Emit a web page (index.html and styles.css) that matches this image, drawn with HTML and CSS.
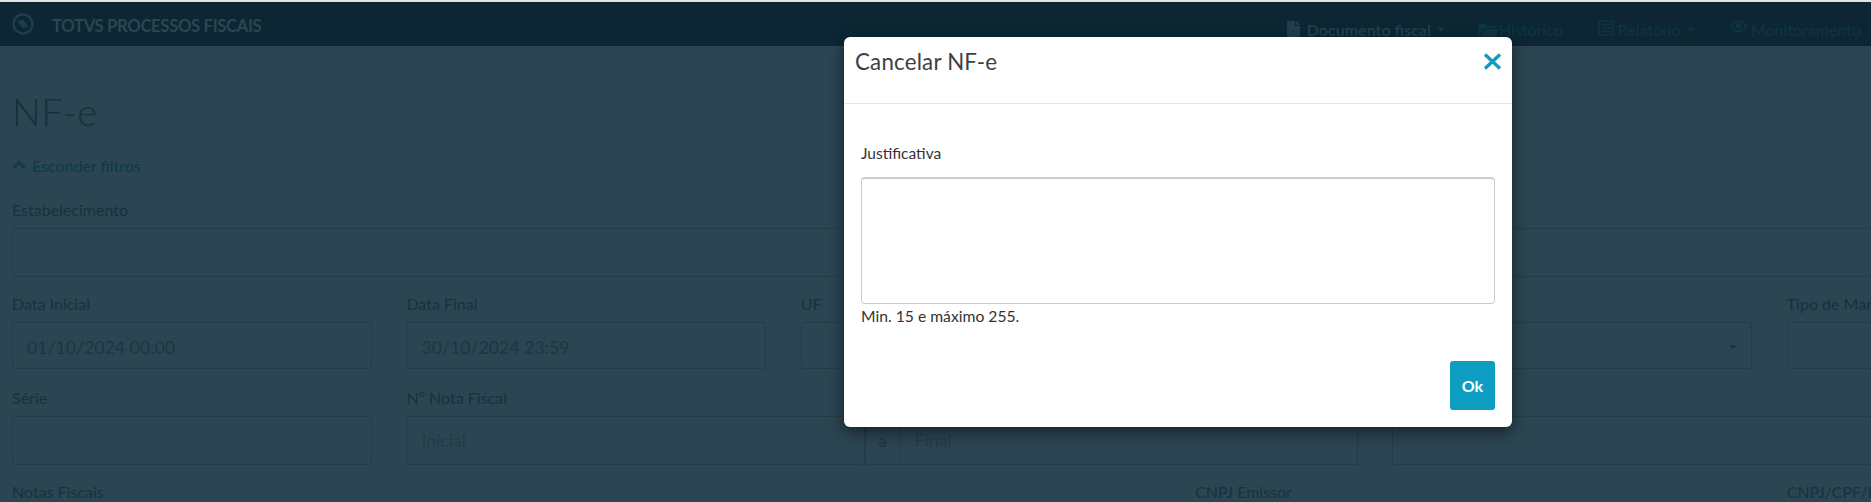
FILE: index.html
```html
<!DOCTYPE html>
<html lang="pt-BR">
<head>
<meta charset="utf-8">
<title>NF-e</title>
<link rel="stylesheet" href="styles.css">
</head>
<body>
<header class="navbar">
  <div class="brand">
    <svg class="brand-logo" viewBox="0 0 22 22" aria-hidden="true"><circle cx="11" cy="11" r="9.5" fill="none" stroke="#1f3e4d" stroke-width="2.4"/><path d="M5.5 8.5 L11 6.5 C13 9 13.5 10.5 16.5 13.5 L11 15.5 C9 13 8.5 11.5 5.5 8.5Z" fill="#1f3e4d"/></svg>
    <span class="brand-name">TOTVS PROCESSOS FISCAIS</span>
  </div>
  <nav class="nav">
    <a class="nav-item nav-item--active">
      <svg class="nav-icon nav-icon--doc" viewBox="0 0 13 16" aria-hidden="true"><path d="M0 0h8v5h5v11H0zM9 0l4 4H9z" fill="#233f4d"/></svg>
      <span>Documento fiscal</span><i class="caret"></i>
    </a>
    <a class="nav-item nav-item--folder">
      <svg class="nav-icon nav-icon--folder" viewBox="0 0 20 15" aria-hidden="true"><path d="M0 2h7l2 2h7v2H5L1 13H0zM5.500 7H20l-4 8H1.500z" fill="#0e3546"/></svg>
      <span>Histórico</span>
    </a>
    <a class="nav-item nav-item--report">
      <svg class="nav-icon nav-icon--list" viewBox="0 0 16 16" aria-hidden="true"><path d="M1 1h14v14H1z" fill="none" stroke="#0e3546" stroke-width="1.600"/><path d="M3.500 4.500h9M3.500 8h9M3.500 11.500h9" stroke="#0e3546" stroke-width="1.600"/></svg>
      <span>Relatório</span><i class="caret caret--dim"></i>
    </a>
    <a class="nav-item nav-item--monitor">
      <svg class="nav-icon nav-icon--eye" viewBox="0 0 18 14" aria-hidden="true"><path d="M1 7c2-3.800 5-5.500 8-5.500S15 3.200 17 7c-2 3.800-5 5.500-8 5.500S3 10.800 1 7z" fill="none" stroke="#0e3546" stroke-width="1.800"/><circle cx="9" cy="6.500" r="3" fill="#0e3546"/></svg>
      <span>Monitoramento</span><i class="caret caret--dim"></i>
    </a>
  </nav>
</header>

<main class="page">
  <h1 class="page-title">NF-e</h1>
  <a class="toggle">
    <svg class="toggle-icon" viewBox="0 0 14 10" aria-hidden="true"><path d="M1.500 8 L7 2.500 L12.500 8" fill="none" stroke="#10394b" stroke-width="3"/></svg>
    <span>Esconder filtros</span>
  </a>
  <form class="filters">
    <div class="field span-12"><label class="label">Estabelecimento</label><div class="input"></div></div>

    <div class="field span-2"><label class="label">Data Inicial</label><div class="input input--short">01/10/2024 00:00</div></div>
    <div class="field span-2"><label class="label">Data Final</label><div class="input input--short">30/10/2024 23:59</div></div>
    <div class="field span-2"><label class="label">UF</label><div class="input input--short"></div></div>
    <div class="field span-1"></div>
    <div class="field span-2"><label class="label">Situação</label><div class="input input--short input--select"><i class="caret caret--select"></i></div></div>
    <div class="field span-3"><label class="label">Tipo de Manifestação</label><div class="input input--short"></div></div>

    <div class="field span-2"><label class="label">Série</label><div class="input"></div></div>
    <div class="field span-5">
      <label class="label">Nº Nota Fiscal</label>
      <div class="group">
        <div class="input input--placeholder input--grow">Inicial</div>
        <span class="addon">a</span>
        <div class="input input--placeholder input--grow input--joined">Final</div>
      </div>
    </div>
    <div class="field span-5"><label class="label">Chave</label><div class="input"></div></div>

    <div class="field span-6"><label class="label">Notas Fiscais</label></div>
    <div class="field span-3"><label class="label">CNPJ Emissor</label></div>
    <div class="field span-3"><label class="label">CNPJ/CPF/ID Destinatário</label></div>
  </form>
</main>

<section class="modal" role="dialog" aria-label="Cancelar NF-e">
  <header class="modal-header">
    <h2 class="modal-title">Cancelar NF-e</h2>
    <svg class="modal-close" viewBox="0 0 19 17" aria-hidden="true"><path d="M2 1.500 L17 15.500 M17 1.500 L2 15.500" stroke="#0e9dc2" stroke-width="3.400" fill="none"/></svg>
  </header>
  <div class="modal-body">
    <label class="modal-label">Justificativa</label>
    <textarea class="modal-textarea"></textarea>
    <p class="modal-hint">Min. 15 e máximo 255.</p>
  </div>
  <footer class="modal-footer">
    <button class="btn" type="button">Ok</button>
  </footer>
</section>
</body>
</html>
```
FILE: styles.css
```css
* { box-sizing: border-box; }
html, body { margin: 0; height: 502px; overflow: hidden; }
body {
  background: #2b4552;
  border-top: 2px solid #dfe4e6;
  font-family: Lato, "Liberation Sans", sans-serif;
  color: #1b3442;
  font-size: 16px;
  position: relative;
}

.navbar {
  height: 44px;
  background: #0c2733;
  display: flex;
  align-items: center;
  justify-content: space-between;
  padding-left: 12px;
}
.brand { display: flex; align-items: center; gap: 18px; padding-top: 1px; }
.brand-logo { width: 22px; height: 22px; margin-top: -2px; }
.brand-name { color: #2b4552; font-weight: 700; font-size: 16.700px; letter-spacing: -0.350px; padding-top: 2px; }

.nav { display: flex; align-items: center; padding-top: 10px; margin-right: -3px; }
.nav-item { display: flex; align-items: center; color: #0e3546; font-size: 16px; }
.nav-item--active { color: #233f4d; font-weight: 700; }
.nav-item--folder { margin-left: 35px; }
.nav-item--report { margin-left: 35px; }
.nav-item--monitor { margin-left: 36px; }
.nav-icon { display: block; margin-right: 4px; }
.nav-icon--doc { width: 13px; height: 16px; margin-right: 7px; }
.nav-icon--folder { width: 20px; height: 15px; margin-right: 0; }
.nav-icon--list { width: 16px; height: 16px; margin-top: -3px; }
.nav-icon--eye { width: 17px; height: 14px; margin-top: -6px; }
.caret {
  display: block;
  width: 0;
  height: 0;
  margin-left: 7px;
  border-top: 3px solid #233f4d;
  border-left: 3px solid transparent;
  border-right: 3px solid transparent;
}
.caret--dim { border-top-color: #0e3546; }

.page { padding: 0 12px; }
.page-title {
  margin: 42px 0 0;
  font-size: 38px;
  line-height: 46px;
  font-weight: 300;
  letter-spacing: .500px;
  color: #16303d;
}
.toggle {
  display: flex;
  align-items: center;
  gap: 6px;
  margin-top: 21px;
  height: 20px;
  color: #0e394b;
  font-weight: 400;
}
.toggle-icon { width: 14px; height: 10px; }

.filters {
  display: grid;
  grid-template-columns: repeat(12, 162.600px);
  column-gap: 34.600px;
  row-gap: 17px;
  margin-top: 25px;
}
.field { height: 77px; min-width: 0; }
.span-1 { grid-column: span 1; }
.span-2 { grid-column: span 2; }
.span-3 { grid-column: span 3; }
.span-5 { grid-column: span 5; }
.span-6 { grid-column: span 6; }
.span-12 { grid-column: span 12; }

.label { display: block; height: 20px; line-height: 20px; margin-bottom: 8px; white-space: nowrap; font-weight: 400; color: #18313e; }
.input {
  height: 49px;
  border: 1px solid #243c49;
  border-radius: 3px;
  padding: 0 14px;
  display: flex;
  align-items: center;
  font-size: 17.700px;
  font-weight: 400;
  color: #1d3644;
  position: relative;
}
.input--short { height: 47px; padding-top: 3px; }
.input--placeholder { color: #233b48; }
.input--select { justify-content: flex-end; }
.caret--select { border-top-color: #1b3442; border-top-width: 4px; border-left-width: 4px; border-right-width: 4px; }
.group { display: flex; }
.input--grow { flex: 1; min-width: 0; }
.input--joined { border-left: 0; border-radius: 0 3px 3px 0; }
.addon {
  width: 36px;
  height: 49px;
  display: flex;
  align-items: center;
  justify-content: center;
  border: 1px solid #243c49;
  color: #1d3644;
  font-size: 17.700px;
}

.modal {
  position: absolute;
  left: 844px;
  top: 35px;
  width: 668px;
  height: 390px;
  background: #fff;
  border-radius: 6px;
  box-shadow: 0 5px 15px rgba(0, 0, 0, .5);
  display: flex;
  flex-direction: column;
  color: #333;
}
.modal-header {
  height: 67px;
  flex: none;
  border-bottom: 1px solid #e5e5e5;
  padding: 0 10px 17px 11px;
  display: flex;
  align-items: center;
  justify-content: space-between;
}
.modal-title { margin: 0; font-size: 22.300px; font-weight: 400; color: #3f3f3f; letter-spacing: .200px; }
.modal-close { width: 19px; height: 17px; }
.modal-body { padding: 39px 17px 0; flex: 1; }
.modal-label { display: block; height: 20px; line-height: 20px; font-size: 15.500px; font-weight: 400; color: #333; }
.modal-textarea {
  display: block;
  width: 100%;
  height: 127px;
  margin: 14px 0 0;
  border: 1px solid #ccc;
  border-top-width: 2px;
  border-radius: 4px;
  resize: none;
  background: #fff;
  outline: 0;
}
.modal-hint { margin: 2px 0 0; font-size: 15.700px; line-height: 20px; color: #333; font-weight: 400; }
.modal-footer { padding: 0 17px 17px; display: flex; justify-content: flex-end; }
.btn {
  width: 45px;
  height: 49px;
  background: #0e9dc2;
  border: 0;
  border-radius: 3px;
  color: #fff;
  font-family: inherit;
  font-size: 16px;
  font-weight: 700;
  padding: 0;
}
```
